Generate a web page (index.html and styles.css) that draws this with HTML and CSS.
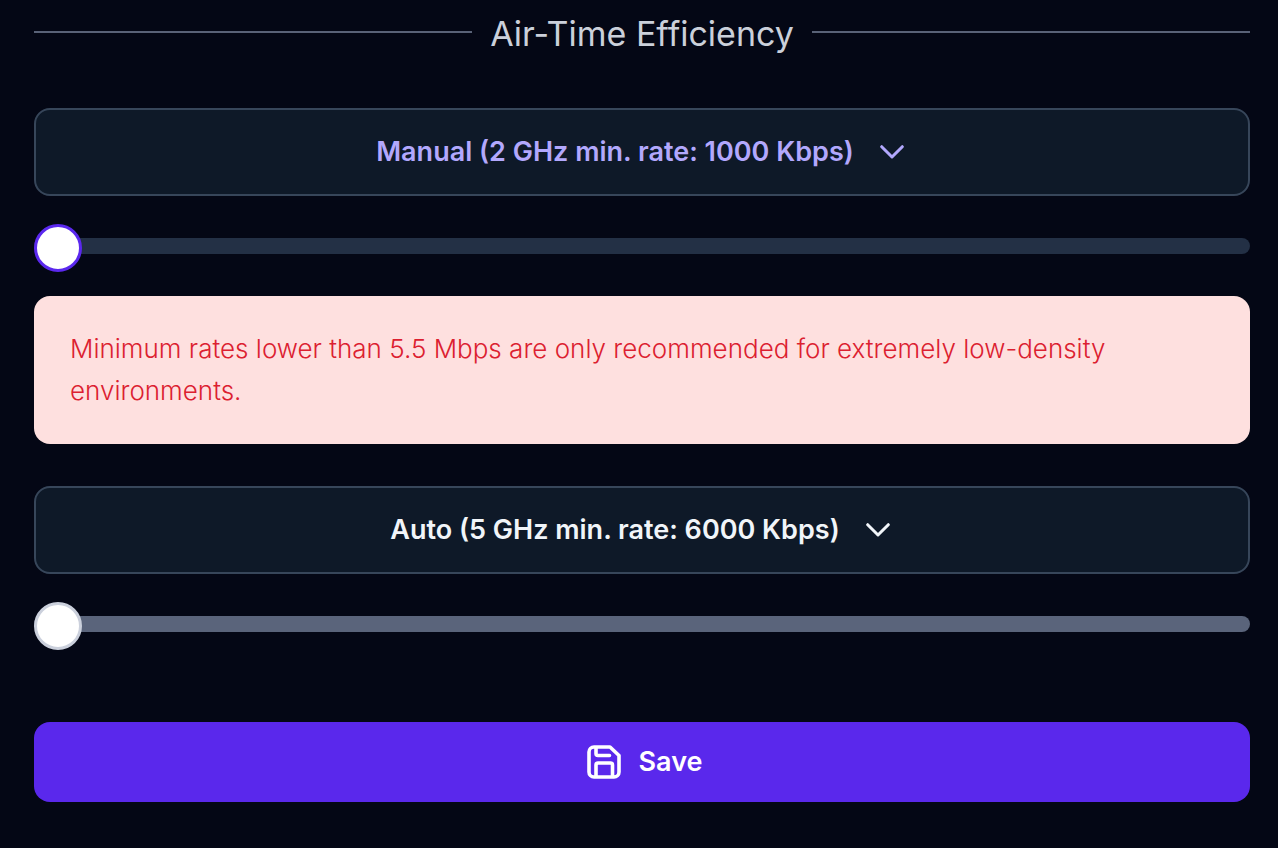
FILE: index.html
```html
<!DOCTYPE html>
<html lang="en">
<head>
<meta charset="utf-8">
<meta name="viewport" content="width=device-width, initial-scale=1">
<title>Air-Time Efficiency</title>
<link rel="stylesheet" href="styles.css">
</head>
<body>
<form class="settings">
  <h2 class="divider"><span class="divider-label">Air-Time Efficiency</span></h2>

  <button type="button" class="picker picker-active">
    <span>Manual (2 GHz min. rate: 1000 Kbps)</span>
    <svg class="chevron" viewBox="0 0 24 14" aria-hidden="true"><path d="M1.700 1.700L12 12L22.300 1.700"/></svg>
  </button>
  <input class="slider" type="range" min="0" max="10" value="0" aria-label="2 GHz minimum rate">

  <p class="alert" role="alert">Minimum rates lower than 5.5 Mbps are only recommended for extremely low-density environments.</p>

  <button type="button" class="picker">
    <span>Auto (5 GHz min. rate: 6000 Kbps)</span>
    <svg class="chevron" viewBox="0 0 24 14" aria-hidden="true"><path d="M1.700 1.700L12 12L22.300 1.700"/></svg>
  </button>
  <input class="slider slider-off" type="range" min="0" max="10" value="0" disabled aria-label="5 GHz minimum rate">

  <button type="button" class="save">
    <svg class="disk" viewBox="0 0 36 36" stroke-width="3.600" aria-hidden="true"><path d="M8 3H24L33 11.500V28a5 5 0 0 1-5 5H8a5 5 0 0 1-5-5V8a5 5 0 0 1 5-5M10 3.500V9.500a2 2 0 0 0 2 2H23.500M10 33V21a2 2 0 0 1 2-2h12.500a2 2 0 0 1 2 2v12"/></svg>
    <span>Save</span>
  </button>
</form>
</body>
</html>
```
FILE: styles.css
```css
* { box-sizing: border-box; }
body {
  margin: 0;
  background: #040715;
  font-family: Inter, "Liberation Sans", sans-serif;
}
.settings {
  display: flex;
  flex-direction: column;
  padding: 8px 28px 46px 34px;
}
.divider {
  display: flex;
  align-items: center;
  gap: 18px;
  margin: 0 0 52px;
  color: #cbd0da;
  font-size: 34px;
  font-weight: 400;
  line-height: 44px;
  white-space: nowrap;
}
.divider-label { padding-top: 4px; }
.divider::before, .divider::after {
  content: "";
  flex: 1;
  height: 2px;
  background: #596277;
}
.picker {
  display: flex;
  align-items: center;
  justify-content: center;
  gap: 26px;
  height: 88px;
  padding: 0 28px 0 24px;
  border: 2px solid #37465a;
  border-radius: 16px;
  background: #0e1928;
  color: #f1f5f9;
  font: 600 27px/40px Inter, "Liberation Sans", sans-serif;
}
.picker-active { color: #b2a8fd; }
.chevron {
  width: 24px;
  height: 14px;
  fill: none;
  stroke: currentColor;
  stroke-width: 3;
  stroke-linecap: round;
  stroke-linejoin: round;
}
.slider {
  appearance: none;
  width: 100%;
  height: 48px;
  margin: 28px 0 24px;
  background: none;
}
.slider::-webkit-slider-runnable-track {
  height: 16px;
  margin-bottom: 4px;
  border-radius: 8px;
  background: #233045;
}
.slider::-webkit-slider-thumb {
  appearance: none;
  width: 48px;
  height: 48px;
  margin-top: -14px;
  border: 3px solid #5b28ee;
  border-radius: 50%;
  background: #fff;
}
.slider-off::-webkit-slider-runnable-track { background: #5a647b; }
.slider-off::-webkit-slider-thumb { border-color: #cbd0dc; }
.alert {
  margin: 0 0 42px;
  padding: 32px 36px;
  border-radius: 16px;
  background: #fee0df;
  color: #dc2030;
  font-size: 26px;
  font-weight: 300;
  line-height: 42px;
}
.save {
  display: flex;
  align-items: center;
  justify-content: center;
  gap: 17px;
  height: 80px;
  margin-top: 48px;
  padding: 0 0 0 4px;
  border: 0;
  border-radius: 16px;
  background: #5a28ec;
  color: #fff;
  font: 600 27px/40px Inter, "Liberation Sans", sans-serif;
}
.disk {
  width: 36px;
  height: 36px;
  fill: none;
  stroke: currentColor;
  stroke-linecap: round;
  stroke-linejoin: round;
}
```
